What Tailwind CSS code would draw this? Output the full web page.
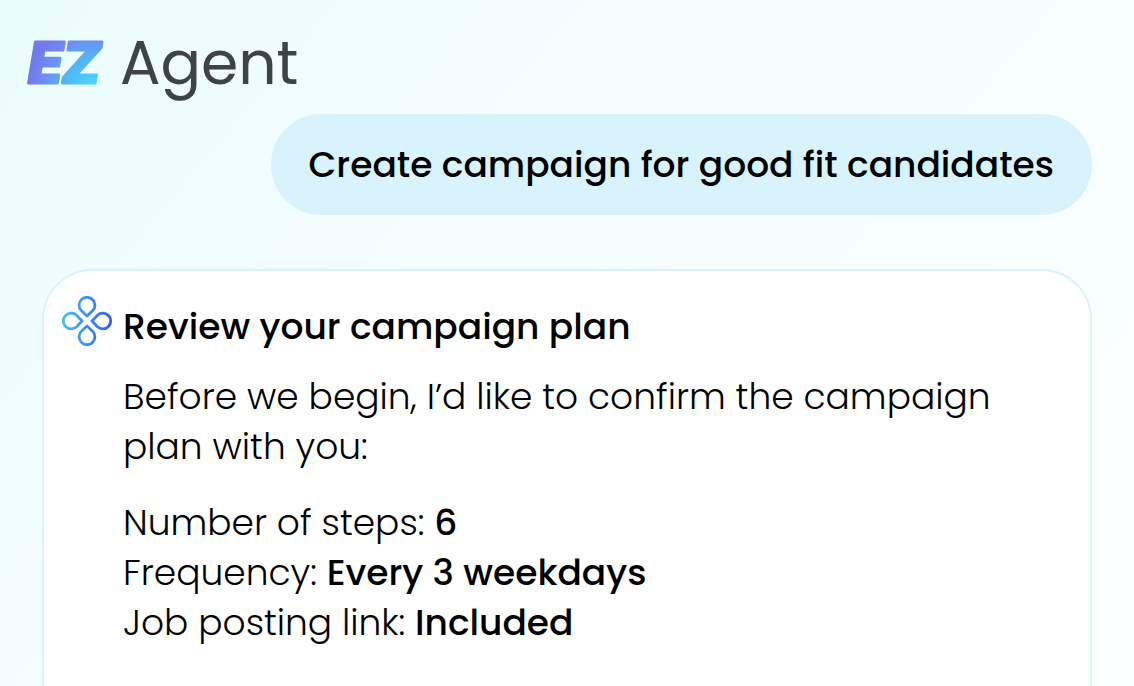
<!DOCTYPE html>
<html lang="en">
<head>
  <meta charset="UTF-8">
  <meta name="viewport" content="width=device-width, initial-scale=1.0">
  <title>EZ Agent</title>
  <script src="https://cdn.jsdelivr.net/npm/@tailwindcss/browser@4"></script>
</head>
<body class="min-h-screen overflow-x-hidden bg-linear-130 from-[#ebfcfd] via-[#f6fdff] via-45% to-[#fcffff] font-[Poppins,Inter,sans-serif] text-4xl/[50px] text-black">

  <div class="flex min-h-screen flex-col">
    <header class="flex items-center gap-3 px-6 pt-7">
      <!-- Logo mark -->
      <svg class="h-[70px] w-[84px]" viewBox="0 0 84 70" role="img" aria-label="EZ">
        <defs>
          <radialGradient id="logoFill" gradientUnits="userSpaceOnUse" cx="70" cy="60" r="66">
            <stop offset="0" stop-color="#45dcfc"/>
            <stop offset="0.5" stop-color="#55aff6"/>
            <stop offset="0.75" stop-color="#708df5"/>
            <stop offset="1" stop-color="#7279ea"/>
          </radialGradient>
        </defs>
        <g font-family="Inter, sans-serif" font-size="57" font-weight="800" font-style="italic" fill="url(#logoFill)" stroke="url(#logoFill)" stroke-width="3" stroke-linejoin="round">
          <text x="4" y="55">E</text>
          <text x="38" y="55">Z</text>
        </g>
      </svg>
      <h1 class="text-[60px]/[70px] text-[#3f4347]">Agent</h1>
    </header>

    <main class="flex grow flex-col px-[42px] pt-4">
      <!-- User message -->
      <p class="self-end rounded-[50px] bg-[#d9f3fd] px-[38px] pt-[26px] pb-[25px] font-medium">Create campaign for good fit candidates</p>

      <!-- Agent reply -->
      <section class="mt-[54px] flex grow items-start gap-[11px] rounded-t-[50px] border-2 border-b-0 border-[#d9f3fd] bg-white pt-[31px] pr-12 pb-9 pl-[18px]">
        <svg class="mt-[-6px] size-[50px] shrink-0" viewBox="0 0 50 50" fill="none" stroke="url(#petals)" stroke-width="2.8" stroke-linejoin="round" aria-hidden="true">
          <defs>
            <linearGradient id="petals" gradientUnits="userSpaceOnUse" x1="0" y1="25" x2="50" y2="25">
              <stop offset="0" stop-color="#46c2ee"/>
              <stop offset="0.5" stop-color="#3f8df5"/>
              <stop offset="1" stop-color="#2b5cff"/>
            </linearGradient>
          </defs>
          <path d="M25 20 L19.2 14.6 A7.9 7.9 0 1 1 30.8 14.6 Z"/>
          <path d="M30 25 L35.4 19.2 A7.9 7.9 0 1 1 35.4 30.8 Z"/>
          <path d="M25 30 L30.8 35.4 A7.9 7.9 0 1 1 19.2 35.4 Z"/>
          <path d="M20 25 L14.6 30.8 A7.9 7.9 0 1 1 14.6 19.2 Z"/>
        </svg>
        <div class="font-light">
          <h2 class="font-medium">Review your campaign plan</h2>
          <p class="mt-5">Before we begin, I’d like to confirm the campaign plan with you:</p>
          <ul class="mt-[26px]">
            <li>Number of steps: <strong class="font-medium">6</strong></li>
            <li>Frequency: <strong class="font-medium">Every 3 weekdays</strong></li>
            <li>Job posting link: <strong class="font-medium">Included</strong></li>
          </ul>
        </div>
      </section>
    </main>
  </div>

</body>
</html>
